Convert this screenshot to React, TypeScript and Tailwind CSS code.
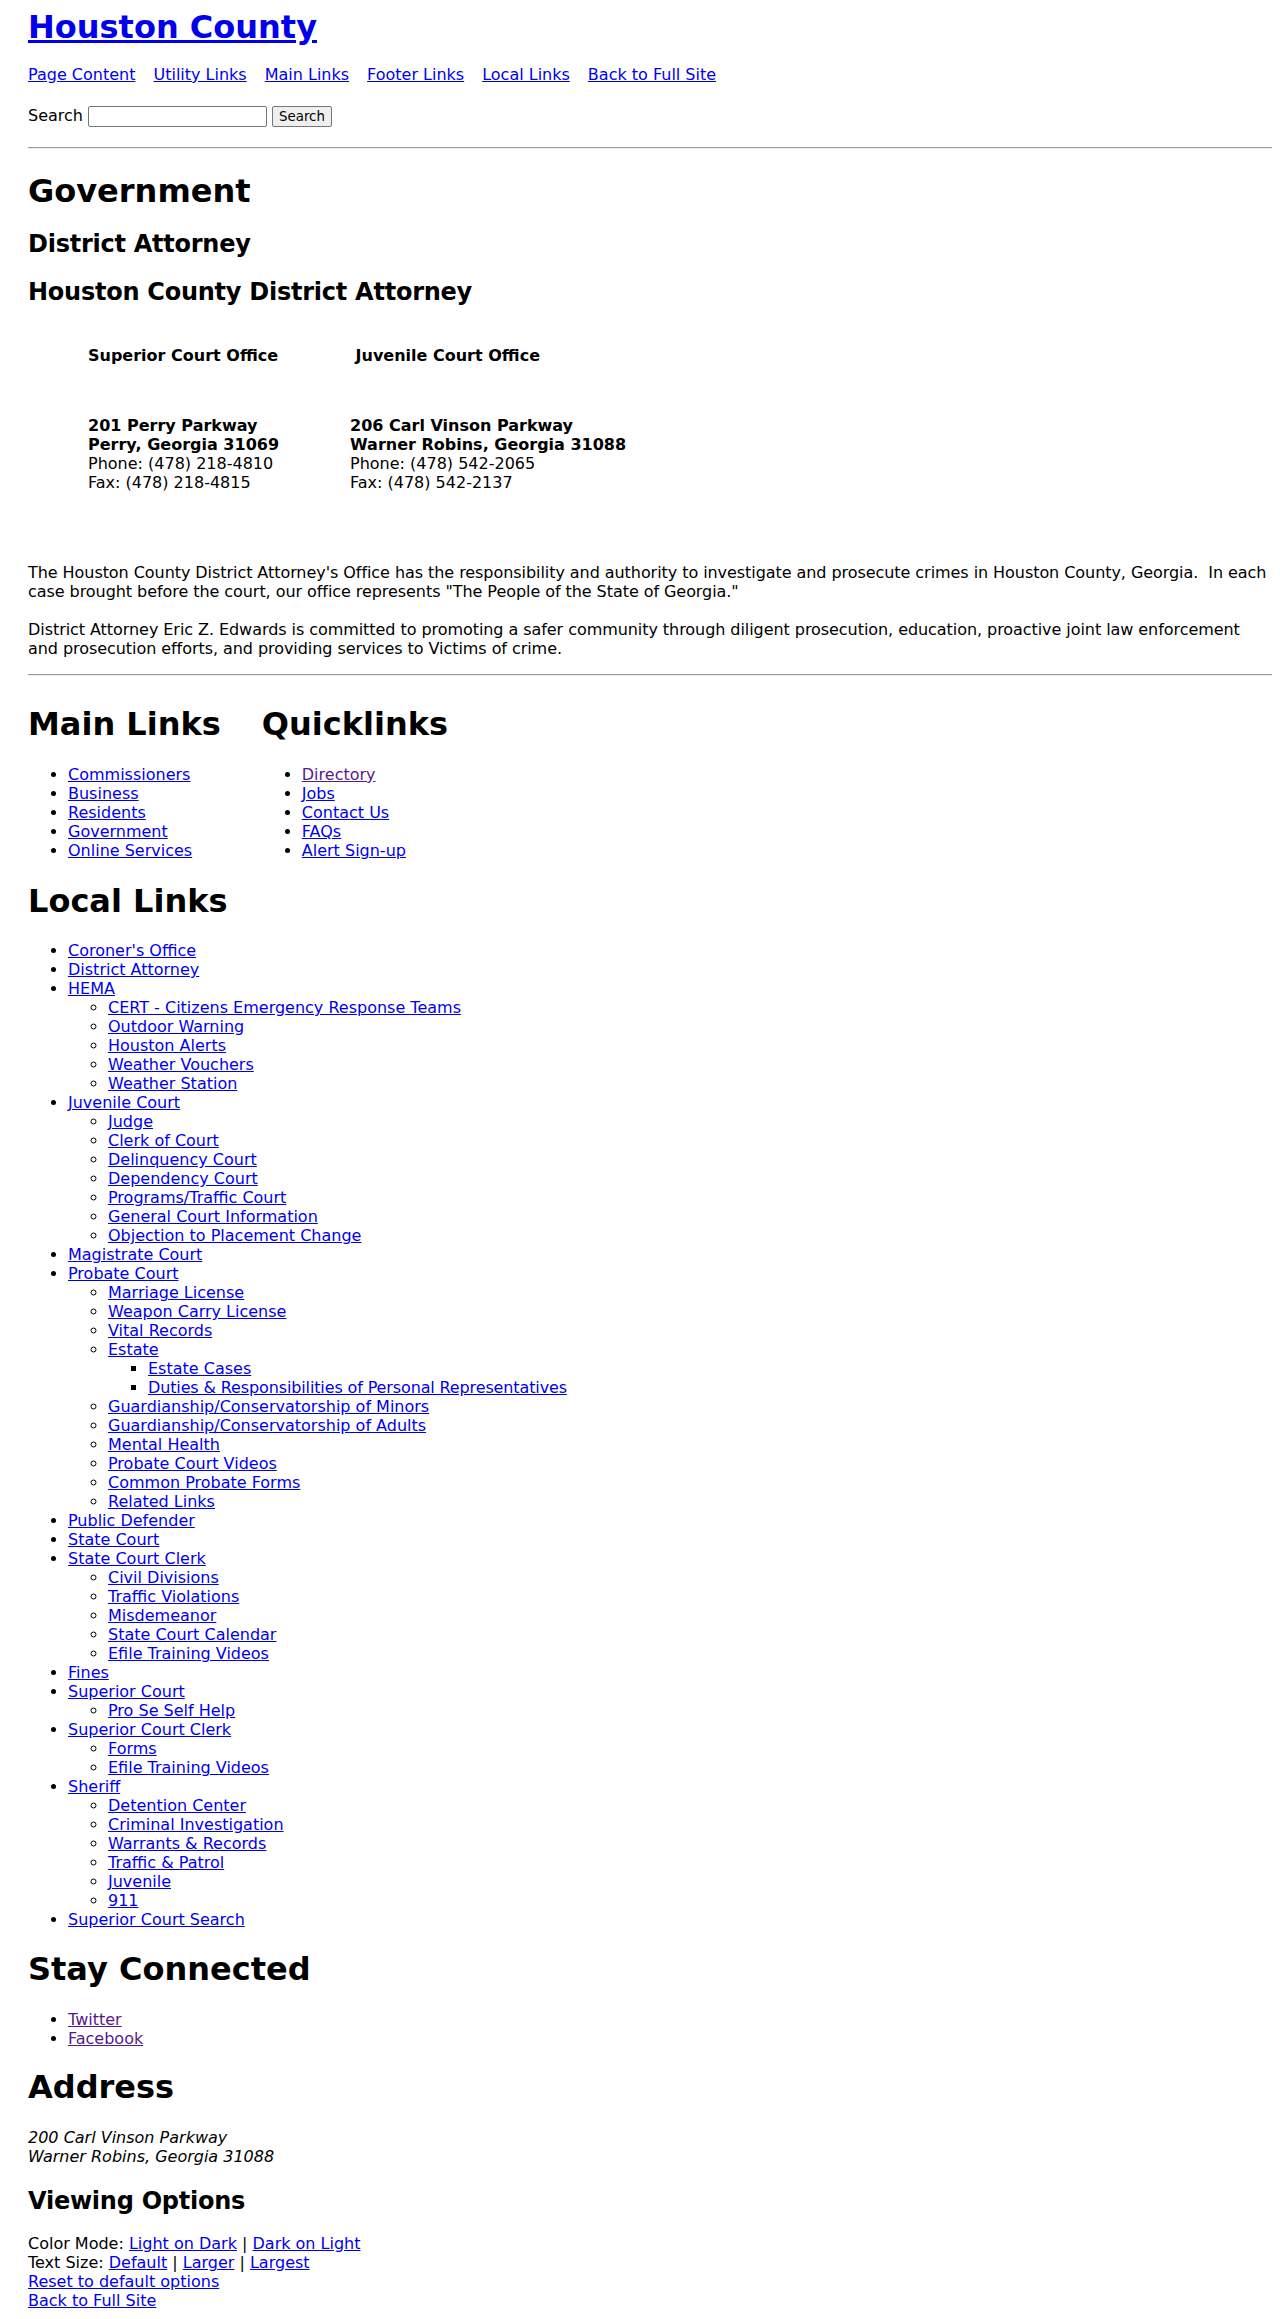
import React from "react";

type Item = { label: string; visited?: boolean; tight?: boolean; children?: Item[] };

const localLinks: Item[] = [
  { label: "Coroner's Office" },
  { label: "District Attorney" },
  {
    label: "HEMA",
    children: [
      { label: "CERT - Citizens Emergency Response Teams" },
      { label: "Outdoor Warning" },
      { label: "Houston Alerts" },
      { label: "Weather Vouchers" },
      { label: "Weather Station" },
    ],
  },
  {
    label: "Juvenile Court",
    children: [
      { label: "Judge" },
      { label: "Clerk of Court" },
      { label: "Delinquency Court" },
      { label: "Dependency Court" },
      { label: "Programs/Traffic Court" },
      { label: "General Court Information" },
      { label: "Objection to Placement Change" },
    ],
  },
  { label: "Magistrate Court" },
  {
    label: "Probate Court",
    children: [
      { label: "Marriage License" },
      { label: "Weapon Carry License" },
      { label: "Vital Records" },
      {
        label: "Estate",
        children: [
          { label: "Estate Cases" },
          { label: "Duties & Responsibilities of Personal Representatives", tight: true },
        ],
      },
      { label: "Guardianship/Conservatorship of Minors" },
      { label: "Guardianship/Conservatorship of Adults" },
      { label: "Mental Health" },
      { label: "Probate Court Videos" },
      { label: "Common Probate Forms" },
      { label: "Related Links" },
    ],
  },
  { label: "Public Defender" },
  { label: "State Court" },
  {
    label: "State Court Clerk",
    children: [
      { label: "Civil Divisions" },
      { label: "Traffic Violations" },
      { label: "Misdemeanor" },
      { label: "State Court Calendar" },
      { label: "Efile Training Videos" },
    ],
  },
  { label: "Fines" },
  { label: "Superior Court", children: [{ label: "Pro Se Self Help" }] },
  {
    label: "Superior Court Clerk",
    children: [{ label: "Forms" }, { label: "Efile Training Videos" }],
  },
  {
    label: "Sheriff",
    children: [
      { label: "Detention Center" },
      { label: "Criminal Investigation" },
      { label: "Warrants & Records" },
      { label: "Traffic & Patrol" },
      { label: "Juvenile" },
      { label: "911" },
    ],
  },
  { label: "Superior Court Search" },
];

const mainLinks: Item[] = [
  { label: "Commissioners" },
  { label: "Business" },
  { label: "Residents" },
  { label: "Government" },
  { label: "Online Services" },
];

const quickLinks: Item[] = [
  { label: "Directory", visited: true },
  { label: "Jobs" },
  { label: "Contact Us" },
  { label: "FAQs" },
  { label: "Alert Sign-up" },
];

const social: Item[] = [
  { label: "Twitter", visited: true },
  { label: "Facebook", visited: true },
];

function A({
  children,
  visited,
  tight,
}: {
  children: React.ReactNode;
  visited?: boolean;
  tight?: boolean;
}) {
  const color = visited ? "text-[#551A8B] underline" : "text-[#0000EE] underline";
  return (
    <a href="#" className={tight ? `${color} tracking-[-0.13px]` : color}>
      {children}
    </a>
  );
}

function List({ items, depth = 0 }: { items: Item[]; depth?: number }) {
  const cls =
    depth === 0
      ? "list-disc pl-10"
      : depth === 1
      ? "list-[circle] pl-10"
      : "list-[square] pl-10";
  return (
    <ul className={cls}>
      {items.map((it, i) => (
        <li key={i}>
          <A visited={it.visited} tight={it.tight}>
            {it.label}
          </A>
          {it.children && <List items={it.children} depth={depth + 1} />}
        </li>
      ))}
    </ul>
  );
}

const h1 = "text-[32px] font-bold leading-[normal]";
const h2 = "text-[24px] font-bold leading-[normal] tracking-[-0.25px]";

export default function App() {
  return (
    <div className="font-['DejaVu_Sans',sans-serif] text-[16px] leading-[normal] text-black bg-white p-[8px]">
      <div className="pl-[20px]">
        <h1 className={h1}>
          <A>Houston County</A>
        </h1>

        <div className="mt-[19px] flex gap-x-[18px]">
          <A>Page Content</A>
          <A>Utility Links</A>
          <A>Main Links</A>
          <A>Footer Links</A>
          <A>Local Links</A>
          <A>Back to Full Site</A>
        </div>

        <div className="mt-[22px] flex items-start h-[21px]">
          <span>Search</span>
          <input
            type="text"
            aria-label="Search"
            className="ml-[5px] w-[179px] h-[21px] border border-[#767676] rounded-[2px] bg-white px-[2px] text-[13.33px]"
          />
          <button className="ml-[5px] w-[60px] h-[21px] border border-[#767676] rounded-[2px] bg-[#efefef] text-[13.33px] leading-[normal] text-black">
            Search
          </button>
        </div>

        <hr className="mt-[20px] border-0 border-t border-t-[#9a9a9a] border-b border-b-[#eeeeee]" />

        <h1 className={`${h1} mt-[23px]`}>Government</h1>
        <h2 className={`${h2} mt-[20px]`}>District Attorney</h2>
        <h2 className={`${h2} mt-[20px]`}>Houston County District Attorney</h2>

        <div className="ml-[60px] mt-[40px] flex font-bold">
          <div className="w-[262px]">Superior Court Office</div>
          <div>{"\u00a0"}Juvenile Court Office</div>
        </div>
        <div className="ml-[60px] mt-[51px] flex">
          <div className="w-[262px]">
            <div className="font-bold">201 Perry Parkway</div>
            <div className="font-bold">Perry, Georgia 31069</div>
            <div>Phone: (478) 218-4810</div>
            <div>Fax: (478) 218-4815</div>
          </div>
          <div>
            <div className="font-bold">206 Carl Vinson Parkway</div>
            <div className="font-bold">Warner Robins, Georgia 31088</div>
            <div>Phone: (478) 542-2065</div>
            <div>Fax: (478) 542-2137</div>
          </div>
        </div>

        <p className="mt-[71px] tracking-[-0.06px]">
          {"The Houston County District Attorney's Office has the responsibility and authority to investigate and prosecute crimes in Houston County, Georgia.\u00a0 In each case brought before the court, our office represents \"The People of the State of Georgia.\""}
          <br />
          <br />
          {"District Attorney Eric Z. Edwards is committed to promoting a safer community through diligent prosecution, education, proactive joint law enforcement and prosecution efforts, and providing services to Victims of crime."}
        </p>

        <hr className="mt-[16px] border-0 border-t border-t-[#9a9a9a] border-b border-b-[#eeeeee]" />

        <div className="mt-[29.4px] flex gap-x-[41px]">
          <div>
            <h1 className={h1}>Main Links</h1>
            <div className="mt-[21.44px]">
              <List items={mainLinks} />
            </div>
          </div>
          <div>
            <h1 className={h1}>Quicklinks</h1>
            <div className="mt-[21.44px]">
              <List items={quickLinks} />
            </div>
          </div>
        </div>

        <h1 className={`${h1} mt-[22px]`}>Local Links</h1>
        <div className="mt-[21.44px]">
          <List items={localLinks} />
        </div>

        <h1 className={`${h1} mt-[21px]`}>Stay Connected</h1>
        <div className="mt-[21.44px]">
          <List items={social} />
        </div>

        <h1 className={`${h1} mt-[20.7px]`}>Address</h1>
        <address className="mt-[22px] italic">
          200 Carl Vinson Parkway
          <br />
          Warner Robins, Georgia 31088
        </address>

        <h2 className={`${h2} mt-[21px]`}>Viewing Options</h2>
        <div className="mt-[19px]">
          <div>
            Color Mode: <A>Light on Dark</A> | <A>Dark on Light</A>
          </div>
          <div>
            Text Size: <A>Default</A> | <A>Larger</A> | <A>Largest</A>
          </div>
          <div>
            <A>Reset to default options</A>
          </div>
          <div>
            <A>Back to Full Site</A>
          </div>
        </div>
      </div>
    </div>
  );
}
